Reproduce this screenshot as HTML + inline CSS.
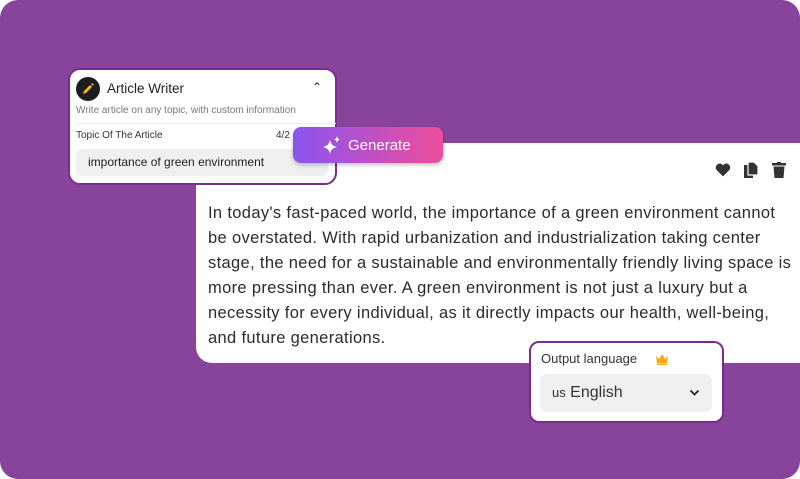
<!DOCTYPE html>
<html><head><style>
body{margin:0;width:800px;height:479px;background:#fff;overflow:hidden;font-family:"Liberation Sans",sans-serif}
.bg{position:absolute;left:0;top:0;width:800px;height:479px;background:#88449b;border-radius:18px}
.main{position:absolute;left:196px;top:143px;width:604px;height:220px;background:#fff;border-radius:0 0 0 16px}
.txt{position:absolute;left:12px;top:58px;width:600px;font-size:16.5px;line-height:25px;color:#2b2b2b;letter-spacing:0.34px;white-space:nowrap}
.aw{position:absolute;left:68px;top:68px;width:265px;height:113px;background:#fff;border:2px solid #7a2d90;border-radius:12px}
.gen{position:absolute;left:293px;top:127px;width:150px;height:36px;border-radius:8px;background:linear-gradient(90deg,#8a54f0,#ee4d9b);color:#fff;font-size:15px;box-shadow:0 2px 4px rgba(0,0,0,.25)}
.lang{position:absolute;left:529px;top:341px;width:191px;height:78px;background:#fff;border:2px solid #7a2d90;border-radius:10px}
</style></head><body>
<div class="bg"></div>
<div class="main">
 <svg style="position:absolute;left:519px;top:20px" width="16" height="14" viewBox="0 0 24 22"><path d="M12 21 2.5 11.5C0 9 0 4.5 3 2.5 6-.5 10 1 12 4 14 1 18-.5 21 2.5 24 4.5 24 9 21.5 11.5Z" fill="#333"/></svg>
 <svg style="position:absolute;left:548px;top:19px" width="14" height="16" viewBox="0 0 14 16"><rect x="0" y="3" width="9" height="13" fill="#333"/><path d="M4 0h6l4 4v9H4z" fill="#333" stroke="#fff" stroke-width="1.2"/></svg>
 <svg style="position:absolute;left:576px;top:19px" width="14" height="16" viewBox="0 0 14 16"><rect x="0" y="1" width="14" height="2.5" fill="#333"/><rect x="5" y="0" width="4" height="2" fill="#333"/><path d="M1.5 4.5h11l-1 11.5h-9z" fill="#333"/></svg>
 <div class="txt">In today's fast-paced world, the importance of a green environment cannot<br>be overstated. With rapid urbanization and industrialization taking center<br>stage, the need for a sustainable and environmentally friendly living space is<br>more pressing than ever. A green environment is not just a luxury but a<br>necessity for every individual, as it directly impacts our health, well-being,<br>and future generations.</div>
</div>
<div class="aw">
 <div style="position:absolute;left:6px;top:7px;width:24px;height:24px;border-radius:50%;background:#1d1d1d"></div>
 <svg style="position:absolute;left:11px;top:12px" width="14" height="14" viewBox="0 0 14 14"><path d="M2 12l1-3 6-6 2 2-6 6z" fill="#f6b81b"/><path d="M10 2l1-1 2 2-1 1z" fill="#f6b81b"/></svg>
 <div style="position:absolute;left:37px;top:11px;font-size:13.5px;color:#222">Article Writer</div>
 <div style="position:absolute;left:242px;top:10px;font-size:12px;color:#222">&#8963;</div>
 <div style="position:absolute;left:6px;top:35px;font-size:10px;color:#777">Write article on any topic, with custom information</div>
 <div style="position:absolute;left:6px;top:53px;width:260px;border-top:1px solid #eee"></div>
 <div style="position:absolute;left:6px;top:60px;font-size:10px;color:#333">Topic Of The Article</div>
 <div style="position:absolute;left:206px;top:60px;font-size:10px;color:#333">4/2</div>
 <div style="position:absolute;left:6px;top:79px;width:252px;height:27px;background:#efefef;border-radius:6px"></div>
 <div style="position:absolute;left:18px;top:85px;font-size:12px;color:#222">importance of green environment</div>
</div>
<div class="gen">
 <svg style="position:absolute;left:29px;top:9px" width="20" height="18" viewBox="0 0 20 18"><path d="M8 4Q9 10 15 11Q9 12 8 18Q7 12 1 11Q7 10 8 4Z" fill="#fff"/><path d="M15 0Q15.5 3 18 3.5Q15.5 4 15 7Q14.5 4 12 3.5Q14.5 3 15 0Z" fill="#fff"/></svg>
 <div style="position:absolute;left:55px;top:10px">Generate</div>
</div>
<div class="lang">
 <div style="position:absolute;left:10px;top:8px;font-size:13px;color:#333">Output language</div>
 <svg style="position:absolute;left:124px;top:10px" width="14" height="12" viewBox="0 0 14 12"><path d="M1 3l3 3 3-5 3 5 3-3-1 7H2z" fill="#f6a81b"/><rect x="2" y="10.5" width="10" height="1.5" fill="#f6a81b"/></svg>
 <div style="position:absolute;left:9px;top:31px;width:172px;height:38px;background:#efefef;border-radius:7px"></div>
 <div style="position:absolute;left:21px;top:41px;font-size:16px;color:#333"><span style="font-size:13px">us</span> English</div>
 <svg style="position:absolute;left:158px;top:46px" width="11" height="8" viewBox="0 0 11 8"><path d="M1.5 1.5l4 4 4-4" stroke="#222" stroke-width="1.8" fill="none"/></svg>
</div>
</body></html>
